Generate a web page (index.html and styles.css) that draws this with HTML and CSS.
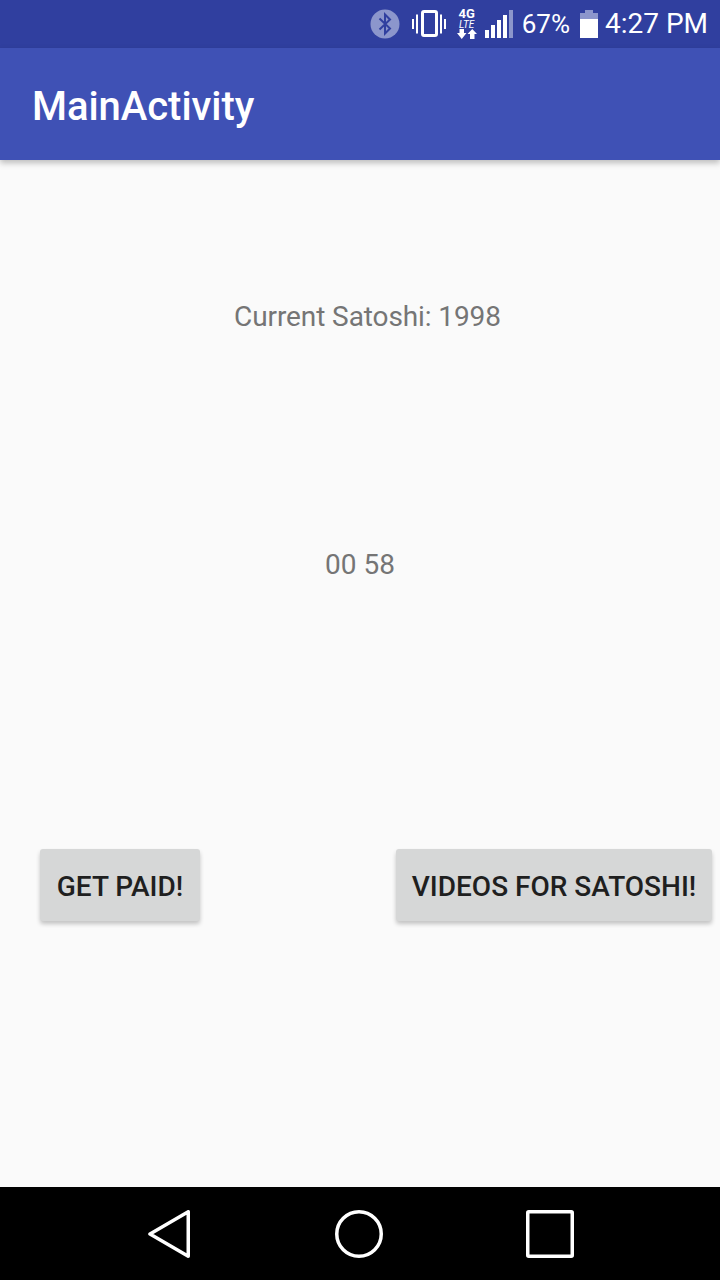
FILE: index.html
```html
<!DOCTYPE html>
<html lang="en">
<head>
    <meta charset="UTF-8">
    <meta name="viewport" content="width=device-width, initial-scale=1.0">
    <title>MainActivity</title>
    <link rel="stylesheet" href="styles.css">
</head>
<body>
    <div class="phone">
        <div class="status-bar">
            <svg class="icon-bluetooth" width="30" height="30" viewBox="0 0 30 30">
                <circle cx="15" cy="15" r="14.5" fill="#8c96cc"/>
                <path d="M9.5 9.5 L20 19.5 L15 24.5 V5.5 L20 10.5 L9.5 20.5" fill="none" stroke="#303f9f" stroke-width="2"/>
            </svg>
            <svg class="icon-vibrate" width="34" height="32" viewBox="0 0 34 32">
                <rect x="10.5" y="3.5" width="14" height="24" rx="1.5" fill="none" stroke="#fff" stroke-width="3"/>
                <path d="M5 6.5 V25.5 M1 11 V21 M29 6.5 V25.5 M33 11 V21" stroke="#fff" stroke-width="2" fill="none"/>
            </svg>
            <div class="network">
                <span class="network-4g">4G</span>
                <span class="network-lte">LTE</span>
                <svg width="20" height="10" viewBox="0 0 20 10">
                    <path d="M2.5 0 H7 V4 H9.5 L4.75 10 L0 4 H2.5 Z M13 10 H17.5 V5 H20 L15.25 0 L10.5 5 H13 Z" fill="#fff"/>
                </svg>
            </div>
            <svg class="icon-signal" width="28" height="28" viewBox="0 0 28 28">
                <rect x="0" y="20" width="4" height="8" fill="#fff"/>
                <rect x="6" y="15" width="4" height="13" fill="#fff"/>
                <rect x="12" y="10" width="4" height="18" fill="#fff"/>
                <rect x="18" y="5" width="4" height="23" fill="#fff"/>
                <rect x="24" y="0" width="4" height="28" fill="#8c96cc"/>
            </svg>
            <span class="status-text battery-text">67%</span>
            <svg class="icon-battery" width="18" height="28" viewBox="0 0 18 28">
                <path d="M5 0 H13 V3 H18 V10 H0 V3 H5 Z" fill="#8c96cc"/>
                <rect x="0" y="9" width="18" height="19" fill="#fff"/>
            </svg>
            <span class="status-text clock">4:27 PM</span>
        </div>

        <div class="app-bar">MainActivity</div>

        <div class="content">
            <div class="satoshi">Current Satoshi: 1998</div>
            <div class="timer">00 58</div>
            <div class="button-row">
                <button class="button button-paid">GET PAID!</button>
                <button class="button button-videos">VIDEOS FOR SATOSHI!</button>
            </div>
        </div>

        <div class="nav-bar">
            <svg width="44" height="48" viewBox="0 0 44 48">
                <path d="M40.25 1.75 V46.25 L2 24 Z" fill="none" stroke="#fff" stroke-width="3.5" stroke-linejoin="round"/>
            </svg>
            <svg width="48" height="48" viewBox="0 0 48 48">
                <circle cx="24" cy="24" r="22.25" fill="none" stroke="#fff" stroke-width="3.5"/>
            </svg>
            <svg width="48" height="48" viewBox="0 0 48 48">
                <rect x="1.75" y="1.75" width="44.5" height="44.5" rx="1" fill="none" stroke="#fff" stroke-width="3.5" stroke-linejoin="round"/>
            </svg>
        </div>
    </div>
</body>
</html>
```

FILE: styles.css
```css
/* Global Styles */
* {
    margin: 0;
    padding: 0;
    box-sizing: border-box;
}

body {
    font-family: Roboto, "Liberation Sans", sans-serif;
    background-color: #fafafa;
}

.phone {
    width: 720px;
    height: 1280px;
    display: flex;
    flex-direction: column;
    overflow: hidden;
}

/* Status bar */
.status-bar {
    height: 48px;
    flex-shrink: 0;
    background-color: #303f9f;
    color: #fff;
    display: flex;
    align-items: center;
    justify-content: flex-end;
    padding-right: 12px;
}

.icon-bluetooth {
    margin-right: 12px;
}

.icon-vibrate {
    margin-right: 11px;
}

.network {
    width: 20px;
    height: 30px;
    margin-right: 8px;
    display: flex;
    flex-direction: column;
    align-items: center;
    color: #fff;
    font-weight: 700;
    line-height: 1;
}

.network-4g {
    font-size: 13px;
    height: 11px;
    line-height: 10px;
}

.network-lte {
    font-size: 10px;
    font-style: italic;
    font-weight: 400;
    height: 9px;
    line-height: 9px;
}

.icon-signal {
    margin-right: 9px;
}

.status-text {
    font-size: 28px;
    line-height: 48px;
}

.battery-text {
    font-size: 26px;
    margin-right: 10px;
}

.icon-battery {
    margin-right: 7px;
}

/* App bar */
.app-bar {
    height: 112px;
    flex-shrink: 0;
    background-color: #3f51b5;
    color: #fff;
    font-size: 40px;
    font-weight: 500;
    letter-spacing: -0.05px;
    line-height: 118px;
    padding-left: 32px;
    box-shadow: 0 3px 6px rgba(0, 0, 0, 0.25);
    position: relative;
}

/* Main content */
.content {
    flex: 1;
    background-color: #fafafa;
    color: #757575;
    font-size: 28px;
    line-height: 40px;
    display: flex;
    flex-direction: column;
}

.satoshi {
    margin-top: 137px;
    padding-left: 15px;
    letter-spacing: -0.1px;
    text-align: center;
}

.timer {
    margin-top: 208px;
    text-align: center;
}

.button-row {
    margin-top: 264px;
    padding: 0 8px 0 40px;
    display: flex;
    justify-content: space-between;
}

.button {
    height: 72px;
    padding-top: 2px;
    font-family: inherit;
    font-size: 28px;
    font-weight: 500;
    color: #1f1f1f;
    background-color: #d6d7d7;
    border: none;
    border-radius: 3px;
    box-shadow: 0 3px 4px rgba(0, 0, 0, 0.22);
}

.button-paid {
    width: 160px;
}

.button-videos {
    width: 316px;
}

/* Navigation bar */
.nav-bar {
    height: 93px;
    flex-shrink: 0;
    background-color: #000;
    display: flex;
    align-items: center;
    gap: 143px;
    padding-left: 148px;
}
```
